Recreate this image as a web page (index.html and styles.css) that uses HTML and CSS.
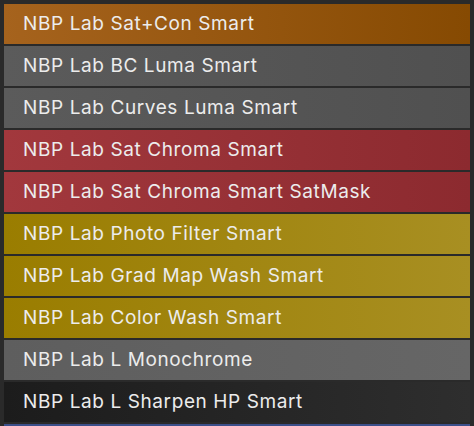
FILE: index.html
```html
<!DOCTYPE html>
<html>
<head>
<meta charset="utf-8">
<link rel="stylesheet" href="styles.css">
</head>
<body>
<div class="panel">
  <ul class="list">
    <li class="item orange">NBP Lab Sat+Con Smart</li>
    <li class="item gray">NBP Lab BC Luma Smart</li>
    <li class="item gray">NBP Lab Curves Luma Smart</li>
    <li class="item red">NBP Lab Sat Chroma Smart</li>
    <li class="item red">NBP Lab Sat Chroma Smart SatMask</li>
    <li class="item yellow">NBP Lab Photo Filter Smart</li>
    <li class="item yellow">NBP Lab Grad Map Wash Smart</li>
    <li class="item yellow">NBP Lab Color Wash Smart</li>
    <li class="item light">NBP Lab L Monochrome</li>
    <li class="item dark">NBP Lab L Sharpen HP Smart</li>
    <li class="item blue"></li>
  </ul>
</div>
</body>
</html>
```
FILE: styles.css
```css
html, body {
  margin: 0;
  padding: 0;
  background: #2a2a2a;
}
.panel {
  width: 474px;
  height: 426px;
  overflow: hidden;
  background: #2a2a2a;
  padding: 4px 4px 0 4px;
  box-sizing: border-box;
}
.list {
  list-style: none;
  margin: 0;
  padding: 0;
  display: flex;
  flex-direction: column;
  gap: 2px;
  width: 466px;
}
.item {
  height: 40px;
  box-sizing: border-box;
  display: flex;
  align-items: center;
  padding: 0 0 2px 19px;
  font-family: Inter, "Liberation Sans", sans-serif;
  font-size: 19px;
  letter-spacing: 0.6px;
  color: #ececec;
  white-space: nowrap;
}
.orange { background: linear-gradient(90deg, #a6631d, #864a02); }
.gray { background: linear-gradient(90deg, #5b5b5b, #505050); }
.red { background: linear-gradient(90deg, #a2383d, #8c2a2f); }
.yellow { background: linear-gradient(90deg, #9a7d00, #a88f22); }
.light { background: linear-gradient(90deg, #5e5e5e, #666666); }
.dark { background: linear-gradient(90deg, #1c1c1c, #2e2e2e); }
.blue { background: #3b4f8a; }
```
